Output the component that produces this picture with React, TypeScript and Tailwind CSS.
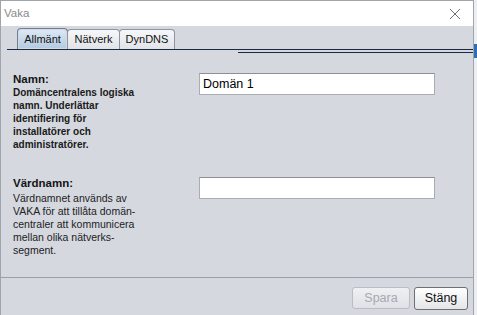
import React from 'react';

const tabs = ['Allmänt', 'Nätverk', 'DynDNS'];

const Field: React.FC<{ label: string; bold?: boolean; lines: string[]; value: string; className?: string }> = ({ label, bold, lines, value, className }) => (
  <div className={`flex items-start pl-[12px] ${className ?? ''}`}>
    <div className="w-[186px] shrink-0">
      <div className="text-[11.5px] leading-[14px] font-bold text-[#141414]">{label}</div>
      <div className={bold ? 'text-[10px] leading-[13px] font-bold text-[#1a1a1a]' : 'mt-[2px] text-[10.5px] leading-[13px] text-[#222]'}>
        {lines.map((l, i) => (
          <div key={i}>{l}</div>
        ))}
      </div>
    </div>
    <input
      readOnly
      defaultValue={value}
      className="mt-[1px] w-[236px] h-[22px] bg-white border border-[#a9acb1] border-t-[#8c8f94] px-[3px] text-[12.5px] text-black outline-none"
    />
  </div>
);

const App: React.FC = () => {
  return (
    <div className="w-[477px] h-[315px] flex overflow-hidden bg-[#eceef1] font-['Liberation_Sans',Arial,sans-serif]">
      <div className="w-[474px] h-full flex flex-col bg-[#d5d8df] border-t border-l border-r border-[#a0a4ab]">
        {/* title bar */}
        <div className="h-[25px] shrink-0 bg-white flex items-center justify-between pl-[3px] pr-[12px]">
          <span className="text-[11.5px] text-[#8a8a8a]">Vaka</span>
          <svg width="12" height="12" viewBox="0 0 12 12" className="text-[#6e6e6e]">
            <path d="M1 1 L11 11 M11 1 L1 11" stroke="currentColor" strokeWidth="1" fill="none" />
          </svg>
        </div>

        {/* tab strip */}
        <div className="mt-[2px] ml-[6px] border-b border-[#1b2a44] h-[22px] flex items-end pl-[10px]">
          {tabs.map((t, i) =>
            i === 0 ? (
              <div key={t} className="w-[51px] h-[21px] rounded-t-[4px] border border-b-0 border-[#6f8094] p-[1px]">
                <div className="h-full rounded-t-[3px] bg-gradient-to-b from-[#dce8f4] to-[#b4cbe2] flex items-center justify-center text-[11px] text-[#111]">
                  {t}
                </div>
              </div>
            ) : (
              <div
                key={t}
                className={`${i === 1 ? 'w-[53px]' : 'w-[56px]'} -ml-px h-[20px] rounded-t-[4px] border border-b-0 border-[#8c95a1] bg-gradient-to-b from-[#f6f7f9] to-[#e0e3e8] flex items-center justify-center text-[11px] text-[#111]`}
              >
                {t}
              </div>
            )
          )}
        </div>
        <div className="mt-[2px] ml-[237px] h-px bg-[#1b2a44]" />

        {/* fields */}
        <Field
          className="mt-[19px]"
          label="Namn:"
          bold
          lines={['Domäncentralens logiska', 'namn. Underlättar', 'identifiering för', 'installatörer och', 'administratörer.']}
          value="Domän 1"
        />
        <Field
          className="mt-[25px]"
          label="Värdnamn:"
          lines={['Värdnamnet används av', 'VAKA för att tillåta domän-', 'centraler att kommunicera', 'mellan olika nätverks-', 'segment.']}
          value=""
        />

        <div className="flex-1" />

        {/* footer */}
        <div className="h-[38px] shrink-0 border-t border-[#9a9ea7] flex justify-end items-start pt-[9px] pr-[5px] gap-[4px]">
          <button className="w-[58px] h-[22px] rounded-[3px] border border-[#b9bdc5] bg-gradient-to-b from-[#eef0f2] to-[#dfe1e6] text-[12.5px] text-[#a5a9b1]">
            Spara
          </button>
          <button className="w-[54px] h-[23px] rounded-[3px] border border-[#6f6f6f] bg-gradient-to-b from-[#ffffff] to-[#e4e5e8] text-[12.5px] text-[#111]">
            Stäng
          </button>
        </div>
      </div>
      <div className="w-[3px] flex flex-col">
        <div className="mt-[44px] h-[14px] bg-[#2f6db5]" />
      </div>
    </div>
  );
};

export default App;
